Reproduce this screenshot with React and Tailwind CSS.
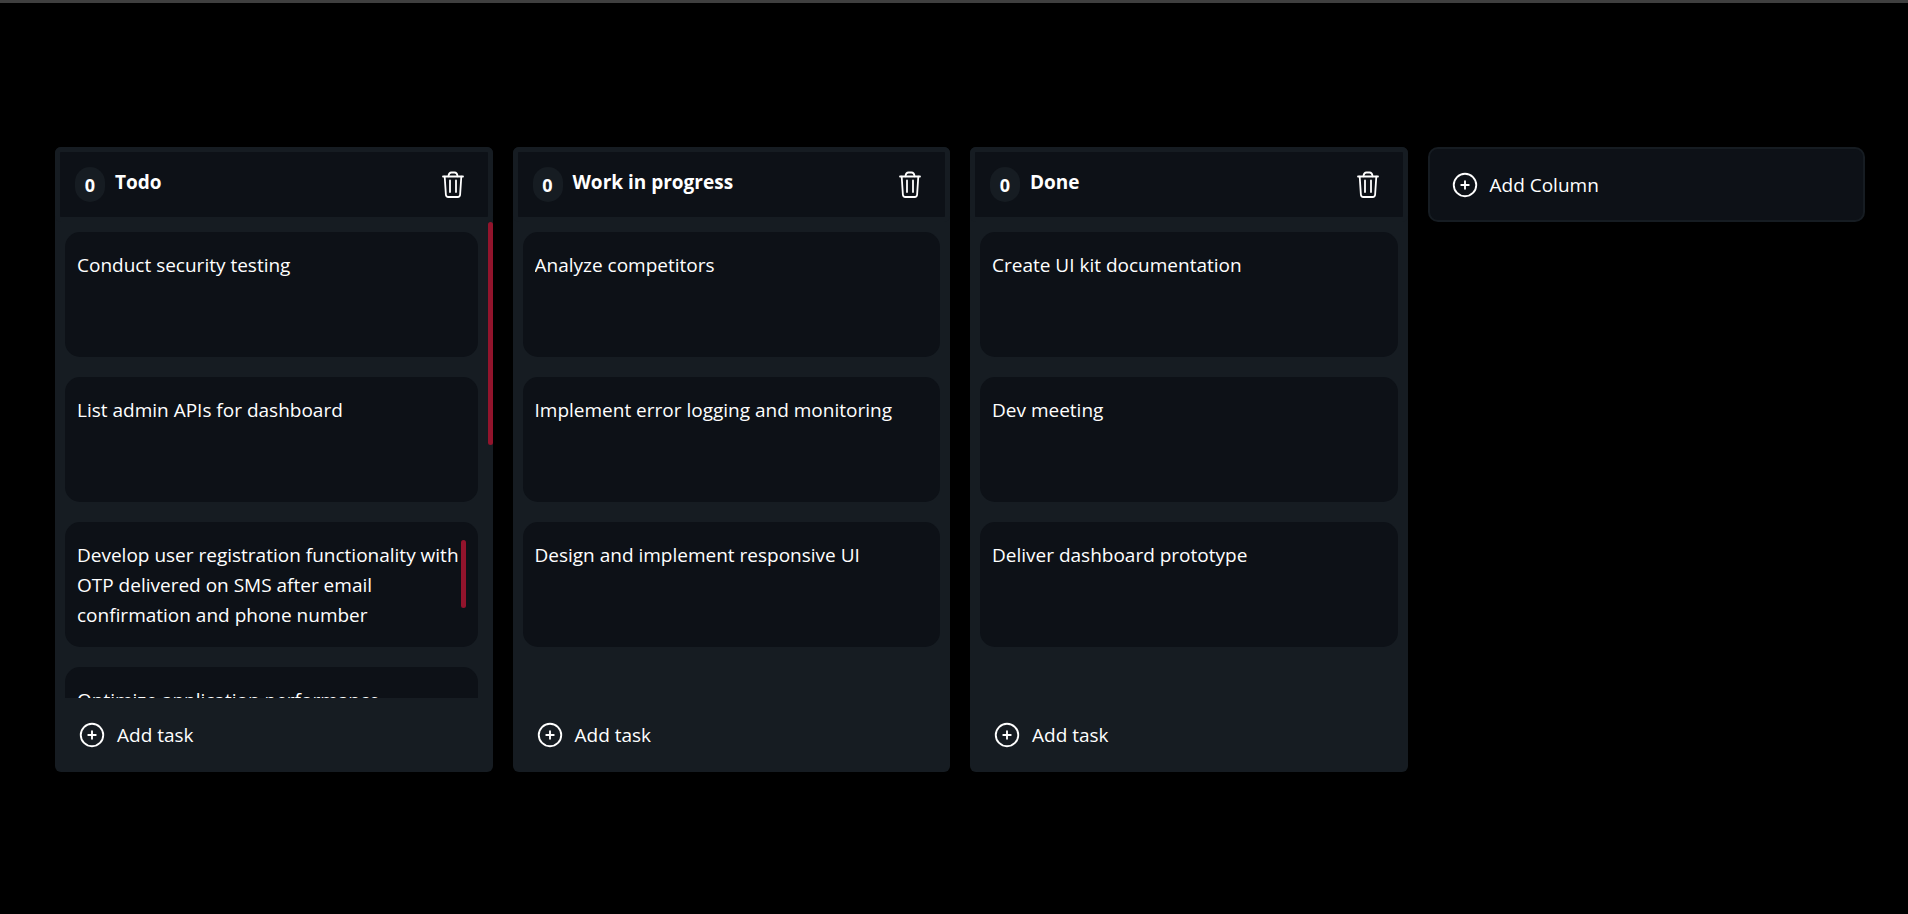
import React, { useLayoutEffect, useRef, useState } from "react";
import { HiOutlinePlusCircle } from "react-icons/hi2";

const initialColumns = [
  {
    id: "todo",
    title: "Todo",
    tasks: [
      "Conduct security testing",
      "List admin APIs for dashboard",
      "Develop user registration functionality with OTP delivered on SMS after email confirmation and phone number\n\n",
      "Optimize application performance",
      "",
      "",
      "",
    ],
  },
  {
    id: "doing",
    title: "Work in progress",
    tasks: [
      "Analyze competitors",
      "Implement error logging and monitoring",
      "Design and implement responsive UI",
    ],
  },
  {
    id: "done",
    title: "Done",
    tasks: ["Create UI kit documentation", "Dev meeting", "Deliver dashboard prototype"],
  },
];

// Scrollable box with a thin red thumb, shown only when the content overflows
const ScrollArea = ({ className, children }) => {
  const viewport = useRef(null);
  const [thumb, setThumb] = useState(null);

  const measure = () => {
    const { clientHeight, scrollHeight, scrollTop } = viewport.current;
    const ratio = clientHeight / scrollHeight;
    setThumb(
      scrollHeight > clientHeight
        ? { height: Math.round(clientHeight * ratio), top: Math.round(scrollTop * ratio) }
        : null
    );
  };

  useLayoutEffect(measure, [children]);

  return (
    <div className={`flex min-h-0 ${className}`}>
      <div
        ref={viewport}
        onScroll={measure}
        className="min-w-0 flex-1 overflow-y-auto [scrollbar-width:none]"
      >
        {children}
      </div>
      {thumb && (
        <div className="w-[5px] shrink-0">
          <div
            className="rounded-full bg-[#92142c]"
            style={{ height: thumb.height, marginTop: thumb.top }}
          />
        </div>
      )}
    </div>
  );
};

const TrashIcon = () => (
  <svg
    viewBox="0 0 30 30"
    className="size-[30px]"
    fill="none"
    stroke="currentColor"
    strokeWidth="1.8"
    strokeLinecap="round"
    strokeLinejoin="round"
  >
    <path d="M5 6.500h20" />
    <path d="M10.500 6.300c.2-2.600 1.100-3.800 3-3.800h3c1.900 0 2.800 1.200 3 3.800" />
    <path d="M6.700 6.700l1.200 18c.1 1.500.9 2.300 2.400 2.300h9.400c1.500 0 2.300-.8 2.400-2.300l1.200-18" />
    <path d="M12 10.500v11.500M18 10.500v11.500" />
  </svg>
);

const TaskCard = ({ content }) => (
  <li className="flex h-[125px] items-center rounded-[15px] bg-[#0d1117] px-3">
    <ScrollArea className="h-[90px] w-full">
      <p className="whitespace-pre-wrap">{content}</p>
    </ScrollArea>
  </li>
);

const Column = ({ column, onDelete, onAddTask }) => (
  <section className="flex h-[625px] min-w-0 flex-col rounded-md bg-[#161c22]">
    <header className="flex h-[75px] shrink-0 items-center justify-between rounded-md border-5 border-[#161c22] bg-[#0d1117] pr-5 pl-[15px]">
      <div className="flex items-start gap-2.5">
        <span className="flex h-[35px] w-[30px] items-center justify-center rounded-full bg-[#161c22] text-lg font-bold">
          0
        </span>
        <h2 className="font-bold">{column.title}</h2>
      </div>
      <button type="button" aria-label={`Delete ${column.title}`} onClick={() => onDelete(column.id)}>
        <TrashIcon />
      </button>
    </header>
    <ScrollArea className="flex-1">
      <ul className="flex flex-col gap-5 p-2.5">
        {column.tasks.map((task, i) => (
          <TaskCard key={i} content={task} />
        ))}
      </ul>
    </ScrollArea>
    <button
      type="button"
      onClick={() => onAddTask(column.id)}
      className="flex h-[74px] shrink-0 items-center gap-2.5 px-[22px]"
    >
      <HiOutlinePlusCircle className="size-[30px]" />
      Add task
    </button>
  </section>
);

const App = () => {
  const [columns, setColumns] = useState(initialColumns);

  const deleteColumn = (id) => setColumns((prev) => prev.filter((col) => col.id !== id));

  const addColumn = () =>
    setColumns((prev) => [
      ...prev,
      { id: String(Date.now()), title: `Column ${prev.length + 1}`, tasks: [] },
    ]);

  const addTask = (id) =>
    setColumns((prev) =>
      prev.map((col) =>
        col.id === id ? { ...col, tasks: [...col.tasks, `Task ${col.tasks.length + 1}`] } : col
      )
    );

  return (
    <div className="min-h-screen border-t-3 border-[#3f3f3f] bg-black font-['Segoe_UI','Open_Sans',sans-serif] text-[19px] leading-[30px] text-white">
      <main className="grid grid-cols-4 items-start gap-5 py-36 pr-[43px] pl-[55px]">
        {columns.map((column) => (
          <Column key={column.id} column={column} onDelete={deleteColumn} onAddTask={addTask} />
        ))}
        <button
          type="button"
          onClick={addColumn}
          className="flex h-[75px] items-center gap-2.5 rounded-[10px] border-2 border-[#161c22] bg-[#0d1117] px-5"
        >
          <HiOutlinePlusCircle className="size-[30px]" />
          Add Column
        </button>
      </main>
    </div>
  );
};

export default App;
